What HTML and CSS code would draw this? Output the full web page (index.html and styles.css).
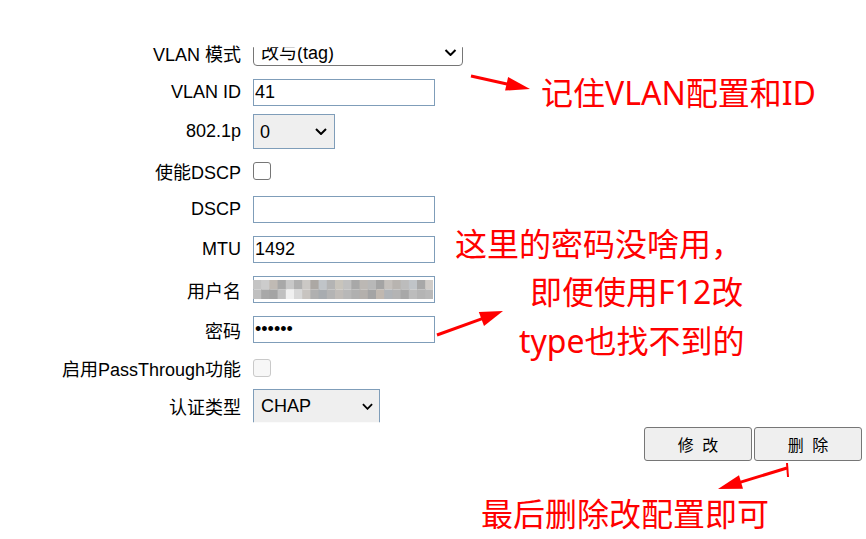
FILE: index.html
```html
<!DOCTYPE html>
<html lang="zh-CN">
<head>
<meta charset="utf-8">
<title>WAN 配置</title>
<link rel="stylesheet" href="styles.css">
</head>
<body>
<div class="page">
  <form class="form">
    <label class="lbl">VLAN 模式</label>
    <div class="ctl"><select class="sel sel-mode"><option>改与(tag)</option></select></div>

    <label class="lbl">VLAN ID</label>
    <div class="ctl"><input class="txt" type="text" value="41"></div>

    <label class="lbl">802.1p</label>
    <div class="ctl"><select class="sel sel-gray sel-prio"><option>0</option></select></div>

    <label class="lbl">使能DSCP</label>
    <div class="ctl"><input class="chk" type="checkbox"></div>

    <label class="lbl">DSCP</label>
    <div class="ctl"><input class="txt" type="text" value=""></div>

    <label class="lbl">MTU</label>
    <div class="ctl"><input class="txt" type="text" value="1492"></div>

    <label class="lbl">用户名</label>
    <div class="ctl">
      <div class="txt mosaic-field">
        <svg class="mosaic" width="180" height="19" viewBox="0 0 180 19">
          <g id="r1">
            <rect x="0" y="0" width="9" height="9.5" fill="#c4c4c4"/>
            <rect x="8.2" y="0" width="9" height="9.5" fill="#cccccc"/>
            <rect x="16.4" y="0" width="9" height="9.5" fill="#c0bab4"/>
            <rect x="24.6" y="0" width="9" height="9.5" fill="#a8a8a8"/>
            <rect x="32.8" y="0" width="9" height="9.5" fill="#c8c8c8"/>
            <rect x="41" y="0" width="9" height="9.5" fill="#b0b0b0"/>
            <rect x="49.2" y="0" width="9" height="9.5" fill="#cbc8c5"/>
            <rect x="57.4" y="0" width="9" height="9.5" fill="#aca8a4"/>
            <rect x="65.6" y="0" width="9" height="9.5" fill="#c0c4c8"/>
            <rect x="73.8" y="0" width="9" height="9.5" fill="#b4b4b4"/>
            <rect x="82" y="0" width="9" height="9.5" fill="#c8c4bc"/>
            <rect x="90.2" y="0" width="9" height="9.5" fill="#c0c0c0"/>
            <rect x="98.4" y="0" width="9" height="9.5" fill="#a8a8a8"/>
            <rect x="106.6" y="0" width="9" height="9.5" fill="#bcb8b4"/>
            <rect x="114.8" y="0" width="9" height="9.5" fill="#b8b8b8"/>
            <rect x="123" y="0" width="9" height="9.5" fill="#a4a4a4"/>
            <rect x="131.2" y="0" width="9" height="9.5" fill="#c4c0bc"/>
            <rect x="139.4" y="0" width="9" height="9.5" fill="#b8b4b0"/>
            <rect x="147.6" y="0" width="9" height="9.5" fill="#bcbcbc"/>
            <rect x="155.8" y="0" width="9" height="9.5" fill="#c0c4c8"/>
            <rect x="164" y="0" width="9" height="9.5" fill="#a8a8a8"/>
            <rect x="172.2" y="0" width="8" height="9.5" fill="#d0ccc8"/>
          </g>
          <g>
            <rect x="0" y="9.5" width="9" height="9.5" fill="#c0c0c0"/>
            <rect x="8.2" y="9.5" width="9" height="9.5" fill="#a8a8a8"/>
            <rect x="16.4" y="9.5" width="9" height="9.5" fill="#a4a4a4"/>
            <rect x="24.6" y="9.5" width="9" height="9.5" fill="#c0c0c0"/>
            <rect x="32.8" y="9.5" width="9" height="9.5" fill="#f0f0f0"/>
            <rect x="41" y="9.5" width="9" height="9.5" fill="#d8d8d8"/>
            <rect x="49.2" y="9.5" width="9" height="9.5" fill="#c8c4c0"/>
            <rect x="57.4" y="9.5" width="9" height="9.5" fill="#b0b0b0"/>
            <rect x="65.6" y="9.5" width="9" height="9.5" fill="#a8acb0"/>
            <rect x="73.8" y="9.5" width="9" height="9.5" fill="#b4b4b4"/>
            <rect x="82" y="9.5" width="9" height="9.5" fill="#c0bcb8"/>
            <rect x="90.2" y="9.5" width="9" height="9.5" fill="#b8b8b8"/>
            <rect x="98.4" y="9.5" width="9" height="9.5" fill="#b0b0b0"/>
            <rect x="106.6" y="9.5" width="9" height="9.5" fill="#b4b0ac"/>
            <rect x="114.8" y="9.5" width="9" height="9.5" fill="#a4a4a4"/>
            <rect x="123" y="9.5" width="9" height="9.5" fill="#c0b8b0"/>
            <rect x="131.2" y="9.5" width="9" height="9.5" fill="#b0b4b8"/>
            <rect x="139.4" y="9.5" width="9" height="9.5" fill="#b4b4b4"/>
            <rect x="147.6" y="9.5" width="9" height="9.5" fill="#a8a8a8"/>
            <rect x="155.8" y="9.5" width="9" height="9.5" fill="#bcbcbc"/>
            <rect x="164" y="9.5" width="9" height="9.5" fill="#b4b4b4"/>
            <rect x="172.2" y="9.5" width="8" height="9.5" fill="#b8b8b8"/>
          </g>
        </svg>
      </div>
    </div>

    <label class="lbl">密码</label>
    <div class="ctl"><input class="txt" type="password" value="123456"></div>

    <label class="lbl">启用PassThrough功能</label>
    <div class="ctl"><input class="chk" type="checkbox" disabled></div>

    <label class="lbl">认证类型</label>
    <div class="ctl"><select class="sel sel-gray sel-auth"><option>CHAP</option></select></div>
  </form>

  <div class="actions">
    <button class="btn" type="button">修 改</button>
    <button class="btn" type="button">删 除</button>
  </div>

  <div class="notes">
    <svg class="arrows" width="866" height="539" viewBox="0 0 866 539">
      <g fill="#ff0000" stroke="none">
        <line x1="471" y1="76" x2="508" y2="84.2" stroke="#ff0000" stroke-width="3"/>
        <polygon points="530,89 508.1,77 505.1,90.6"/>
        <line x1="437" y1="335" x2="483" y2="318.3" stroke="#ff0000" stroke-width="3"/>
        <polygon points="503,311 484,326 478.8,311.9"/>
        <line x1="787" y1="468" x2="739" y2="482.6" stroke="#ff0000" stroke-width="3"/>
        <polygon points="718,489 743,488.7 739,475.3"/>
        <line x1="787" y1="463" x2="788" y2="477" stroke="#ff0000" stroke-width="2"/>
      </g>
    </svg>
    <div class="note note-vlan">记住VLAN配置和ID</div>
    <div class="note note-pw1">这里的密码没啥用，</div>
    <div class="note note-pw2">即便使用F12改</div>
    <div class="note note-pw3">type也找不到的</div>
    <div class="note note-del">最后删除改配置即可</div>
  </div>
</div>
</body>
</html>
```

FILE: styles.css
```css
html, body {
  margin: 0;
  padding: 0;
  background: #ffffff;
}

.page {
  position: relative;
  width: 866px;
  height: 539px;
  overflow: hidden;
  font-family: "Liberation Sans", Arial, "Noto Sans CJK SC", sans-serif;
  font-size: 18px;
  color: #000;
}

.form {
  display: grid;
  grid-template-columns: 241px 1fr;
  grid-template-rows: 39.5px 39.5px 39.5px 39px 38.5px 40.5px 40.5px 39px 38.5px 37.5px;
  column-gap: 12px;
  padding-top: 33px;
  margin: 0;
}

.lbl {
  display: flex;
  align-items: center;
  justify-content: flex-end;
  white-space: nowrap;
}

.ctl {
  display: flex;
  align-items: center;
}

.txt {
  box-sizing: border-box;
  width: 182px;
  height: 27px;
  margin: 0;
  padding: 0 1px;
  border: 1px solid #7f9db9;
  border-radius: 0;
  background: #fff;
  font-family: "Liberation Sans", Arial, "Noto Sans CJK SC", sans-serif;
  font-size: 18px;
  color: #000;
  outline: none;
}

.mosaic-field {
  display: flex;
  align-items: flex-start;
  overflow: visible;
}

.mosaic {
  display: block;
  margin: 3px 0 0 -2px;
}

.sel {
  box-sizing: border-box;
  appearance: none;
  -webkit-appearance: none;
  margin: 0;
  padding: 0 0 0 6px;
  font-family: "Liberation Sans", Arial, "Noto Sans CJK SC", sans-serif;
  font-size: 18px;
  color: #000;
  background-repeat: no-repeat;
  background-image: url("data:image/svg+xml;utf8,<svg xmlns='http://www.w3.org/2000/svg' width='12' height='7' viewBox='0 0 12 7'><path d='M1 1 L6 6 L11 1' fill='none' stroke='black' stroke-width='2'/></svg>");
  outline: none;
}

.sel-mode {
  width: 210px;
  height: 27px;
  border: 1px solid #767676;
  border-radius: 4px;
  background-color: #fff;
  background-size: 13px 7px;
  background-position: right 5px center;
  padding-left: 7px;
  clip-path: inset(8px 0 0 0);
}

.sel-gray {
  height: 35px;
  border: 1px solid #7f9db9;
  border-radius: 0;
  background-color: #efefef;
}

.sel-prio {
  width: 82px;
  background-size: 12px 7px;
  background-position: right 7px center;
}

.sel-auth {
  width: 127px;
  background-size: 11px 7px;
  background-position: right 6px center;
  padding-left: 7px;
  clip-path: inset(0 0 1.5px 0);
}

.chk {
  appearance: none;
  -webkit-appearance: none;
  box-sizing: border-box;
  width: 18px;
  height: 18px;
  margin: 0;
  border: 1px solid #767676;
  border-radius: 3px;
  background: #fff;
}

.chk:disabled {
  border-color: #c9c9c9;
  background: #f7f7f7;
}

.actions {
  display: flex;
  justify-content: flex-end;
  gap: 2px;
  margin-top: 2px;
  padding-right: 4px;
}

.btn {
  box-sizing: border-box;
  width: 108px;
  height: 34px;
  margin: 0;
  padding: 0 0 0 2px;
  border: 1px solid #767676;
  border-radius: 3px;
  background: #efefef;
  font-family: "Liberation Sans", Arial, "Noto Sans CJK SC", sans-serif;
  font-size: 16px;
  letter-spacing: 2px;
  color: #000;
}

.notes {
  position: absolute;
  inset: 0;
  pointer-events: none;
}

.arrows {
  position: absolute;
  left: 0;
  top: 0;
}

.note {
  position: absolute;
  font-family: "Noto Sans", "Noto Sans CJK SC", sans-serif;
  font-size: 32px;
  line-height: 32px;
  color: #ff0000;
  white-space: nowrap;
}

.note-vlan { left: 541px; top: 77px; }
.note-pw1  { left: 455px; top: 228px; }
.note-pw2  { left: 530px; top: 276px; }
.note-pw3  { left: 519px; top: 325px; }
.note-del  { left: 481px; top: 496px; font-family: "Noto Sans CJK SC", sans-serif; }
```
